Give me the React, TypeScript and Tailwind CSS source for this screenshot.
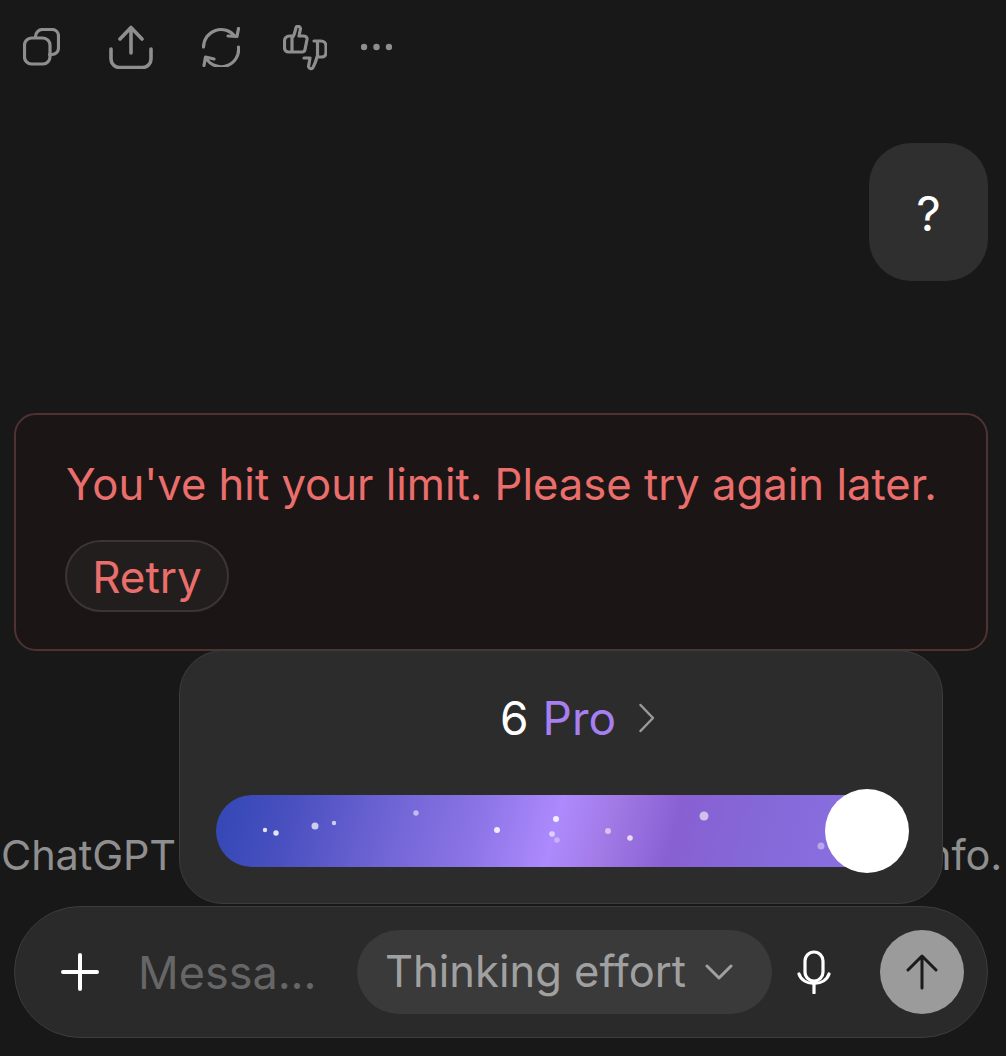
import React from "react";

const dots: [number, number, number, number][] = [
  [265, 830, 2.2, 0.85], [276, 833, 2.7, 0.85], [315, 826, 3.5, 0.7], [334, 823, 2.2, 0.7],
  [416, 813, 2.7, 0.55], [497, 830, 3, 0.85], [556, 819, 3, 0.85], [552, 834, 2.8, 0.6],
  [557, 840, 2.8, 0.35], [608, 831, 3, 0.55], [630, 838, 2.8, 0.75], [704, 816, 4.5, 0.6], [821, 846, 3.5, 0.4],
];

function ActionBar() {
  const s = { fill: "none", stroke: "#8e8e8e", strokeWidth: 3.2, strokeLinecap: "round" as const, strokeLinejoin: "round" as const };
  return (
    <div className="flex h-[94px] items-start pl-[23px] pt-[25px]">
      <svg width="37" height="38" viewBox="0 0 37 38" className="mt-[3px]" {...s}>
        <rect x="1.5" y="10" width="25.5" height="26" rx="7" />
        <path d="M12.5 8.5a7 7 0 0 1 7-7h10a6.5 6.5 0 0 1 6 6.5v12a6.5 6.5 0 0 1-6.500 6.500h-2.500" />
      </svg>
      <svg width="44" height="44" viewBox="0 0 44 44" className="ml-[49px]" {...s} strokeWidth={3.6}>
        <path d="M22 2.500V28M11 14 22 2.500 33 14M2 24v10a8.500 8.500 0 0 0 8.500 8.500h23A8.500 8.500 0 0 0 42 34V24" />
      </svg>
      <svg width="38" height="40" viewBox="0 0 38 40" className="ml-[49px] mt-[2px]" {...s}>
        <path d="M1.500 20A17.500 17.500 0 0 1 33 9.500M36.500 1.500 35 9.500 26 9M36.500 20A17.500 17.500 0 0 1 4 31M2 38.500 3.500 30l8.500 2" />
      </svg>
      <svg width="44" height="46" viewBox="0 0 44 46" className="ml-[43px]" {...s}>
        <path d="M9 13c3-3 3-7 4-10.500 1-2 4-1.500 4.500 1L16 11h5a3 3 0 0 1 3 3.500l-2 10a3 3 0 0 1-3 2.500H5.500a4 4 0 0 1-4-4v-7a5 5 0 0 1 5-5H9v16" />
        <path d="M31 16h7a5 5 0 0 1 5 5v7a4 4 0 0 1-4 4h-5c-1 4-2 7-4 10.500-1 2-4 1.500-4.500-1L27 33h-6M34.500 17v15" />
      </svg>
      <svg width="31" height="8" viewBox="0 0 31 8" className="ml-[34px] mt-[18px]" fill="#8e8e8e">
        <circle cx="3" cy="4" r="3.200" />
        <circle cx="15.500" cy="4" r="3.200" />
        <circle cx="28" cy="4" r="3.200" />
      </svg>
    </div>
  );
}

function Popover() {
  return (
    <div className="absolute left-[179px] top-[650px] h-[254px] w-[764px] rounded-[44px] border border-[#3c3c3c] bg-[#2c2c2c]">
      <div className="flex h-[144px] items-center justify-center pb-[10px] pl-[34px] text-[46px] leading-none">
        <span className="text-white">6</span>
        <span className="ml-[14px] text-[#a67ff0]">Pro</span>
        <svg width="18" height="30" viewBox="0 0 18 30" fill="none" stroke="#9a9a9a" strokeWidth="2.500" strokeLinecap="round" strokeLinejoin="round" className="ml-[22px]">
          <path d="M2.500 2 15 15 2.500 28" />
        </svg>
      </div>
      <div className="relative ml-[36px] h-[72px] w-[650px] rounded-l-full bg-[linear-gradient(105deg,#3247b5_0%,#4a50c0_12%,#7266d6_28%,#8b74e6_40%,#ad8afd_52%,#a27ae6_60%,#8860d2_70%,#8568d8_82%,#8a70e2_100%)]">
        <svg width="650" height="72" viewBox="216 795 650 72" className="absolute left-0 top-0">
          {dots.map(([x, y, r, o]) => (
            <circle key={x} cx={x} cy={y} r={r} fill="#fff" fillOpacity={o} />
          ))}
        </svg>
      </div>
      <div className="absolute left-[645px] top-[138px] h-[84px] w-[84px] rounded-full bg-white" />
    </div>
  );
}

function Composer() {
  return (
    <div className="ml-[14px] mr-[18px] flex h-[132px] items-center rounded-full border border-[#3c3c3c] bg-[#2a2a2a] pl-[46px]">
      <svg width="38" height="38" viewBox="0 0 38 38" fill="none" stroke="#fff" strokeWidth="4" strokeLinecap="round">
        <path d="M19 2v34M2 19h34" />
      </svg>
      <span className="ml-[39px] w-[219px] text-[45px] leading-none text-[#666666]">Messa...</span>
      <div className="flex h-[84px] w-[415px] items-center rounded-full bg-[#3a3a3a] pl-[28px]">
        <span className="text-[43.500px] leading-none text-[#a0a0a0]">Thinking effort</span>
        <svg width="28" height="16" viewBox="0 0 28 16" fill="none" stroke="#a0a0a0" strokeWidth="3" strokeLinecap="round" strokeLinejoin="round" className="ml-[19px]">
          <path d="M2 2l12 12L26 2" />
        </svg>
      </div>
      <svg width="34" height="44" viewBox="0 0 34 44" fill="none" stroke="#fff" strokeWidth="3.200" strokeLinecap="round" className="ml-[25px]">
        <rect x="8" y="2" width="18" height="29" rx="9" />
        <path d="M2 24c2 6 8 9.500 15 9.500S30 30 32 24M17 34v9" />
      </svg>
      <div className="ml-[49px] flex h-[84px] w-[84px] items-center justify-center rounded-full bg-[#9b9b9b]">
        <svg width="32" height="36" viewBox="0 0 32 36" fill="none" stroke="#1b1b1b" strokeWidth="3" strokeLinecap="round" strokeLinejoin="round">
          <path d="M16 34V2M2 16 16 2l14 14" />
        </svg>
      </div>
    </div>
  );
}

export default function App() {
  return (
    <div className="relative flex h-[1056px] w-[1006px] flex-col overflow-hidden bg-[#181818] font-['Inter',sans-serif]">
      <ActionBar />
      <div className="mr-[18px] mt-[49px] flex h-[138px] w-[119px] items-center justify-center self-end rounded-[42px] bg-[#2f2f2f] pt-[3px] text-[48px] leading-none text-white">?</div>
      <div className="ml-[14px] mr-[18px] mt-[132px] h-[238px] rounded-[22px] border-2 border-[#4f3232] bg-[#1c1516] pl-[50px] pt-[44px]">
        <p className="whitespace-nowrap text-[43.600px] leading-[52px] text-[#ea6f6c]">You've hit your limit. Please try again later.</p>
        <div className="-ml-[1px] mt-[29px] flex h-[72px] w-[164px] items-center justify-center rounded-full border-2 border-[#3d3535] bg-[#231e1e] pt-[2px] text-[44px] leading-none text-[#ea6f6c]">Retry</div>
      </div>
      <p className="mt-[178px] whitespace-nowrap pl-[1px] text-[41.500px] leading-[52px] tracking-[-0.15px] text-[#8f8f8f]">ChatGPT can make mistakes. Check important info.</p>
      <div className="mt-[25px]">
        <Composer />
      </div>
      <Popover />
    </div>
  );
}
